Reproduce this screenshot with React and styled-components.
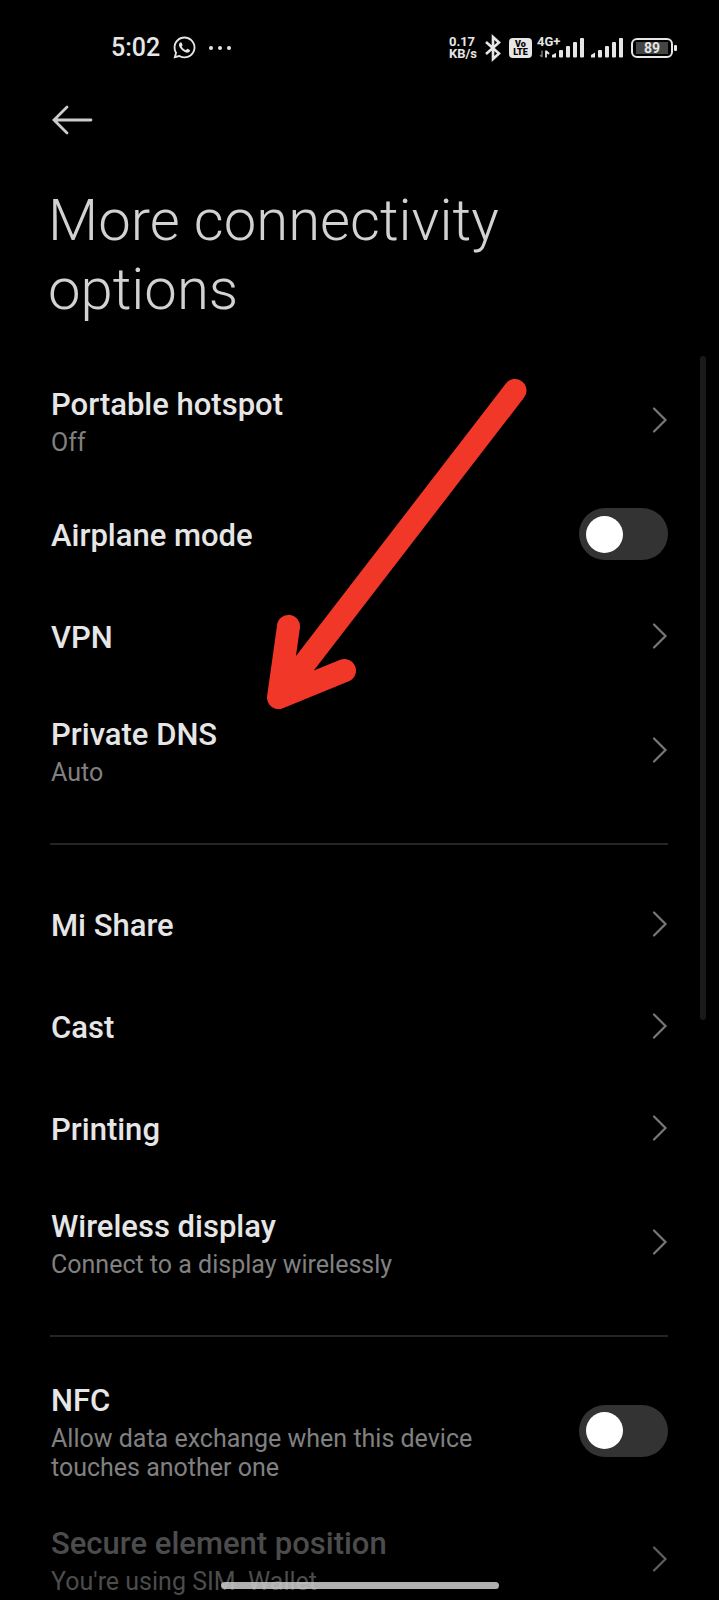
import React from 'react';
import styled, { createGlobalStyle } from 'styled-components';
import { FaWhatsapp } from 'react-icons/fa';

const GlobalStyle = createGlobalStyle`
  * {
    box-sizing: border-box;
  }

  body {
    margin: 0;
    background: #000;
    font-family: Roboto, "Liberation Sans", sans-serif;
  }
`;

const Screen = styled.div`
  position: relative;
  height: 100vh;
  overflow: hidden;
  background: #000;
  color: #e6e6e6;
`;

const StatusBar = styled.div`
  display: flex;
  align-items: center;
  justify-content: space-between;
  height: 95px;
  padding: 0 42px 0 111px;
`;

const StatusGroup = styled.div`
  display: flex;
  align-items: center;
  gap: ${(props) => props.$gap}px;
`;

const Time = styled.span`
  font-size: 25px;
  font-weight: 500;
  line-height: 28px;
`;

const Speed = styled.span`
  font-size: 13px;
  font-weight: 700;
  line-height: 12px;
`;

const VoLte = styled.span`
  display: flex;
  flex-direction: column;
  align-items: center;
  justify-content: center;
  width: 23px;
  height: 20px;
  border-radius: 4px;
  background: #e6e6e6;
  color: #000;
  font-size: 9px;
  font-weight: 900;
  line-height: 8px;
`;

const Mobile = styled.div`
  display: flex;
  position: relative;
`;

const NetworkType = styled.span`
  position: absolute;
  top: 0;
  left: -2px;
  font-size: 13px;
  font-weight: 700;
  line-height: 10px;
`;

const Battery = styled.span`
  display: flex;
  align-items: center;
`;

const BatteryBody = styled.span`
  display: flex;
  width: 42px;
  height: 20px;
  padding: 2px 3px;
  border: 2px solid #e6e6e6;
  border-radius: 6px;
`;

const BatteryLevel = styled.span`
  flex: 1;
  background: #444;
  font-size: 14px;
  font-weight: 700;
  line-height: 13px;
  text-align: center;
`;

const BatteryTip = styled.span`
  width: 3px;
  height: 6px;
  margin-left: 1px;
  border-radius: 1px;
  background: #e6e6e6;
`;

const Header = styled.header`
  padding: 0 48px;
`;

const BackButton = styled.button`
  display: block;
  height: 52px;
  padding: 0 4px;
  border: 0;
  background: none;
  color: #ccc;
`;

const Title = styled.h1`
  margin: 0;
  padding: 39px 0 33px;
  color: #d2d2d2;
  font-size: 58px;
  font-weight: 300;
  line-height: 69px;
`;

const Section = styled.section`
  margin: 0 51px 0 50px;

  & + & {
    margin-top: 30px;
    padding-top: 28px;
    border-top: 2px solid #242424;
  }
`;

const rowStyles = `
  display: flex;
  align-items: center;
  justify-content: space-between;
  width: 100%;
  padding: 14px 0;
  border: 0;
  background: none;
  color: inherit;
  font-family: inherit;
  text-align: left;
`;

const RowText = styled.span`
  display: flex;
  flex-direction: column;
  gap: 5px;
  max-width: 440px;
  padding: 4px 0 0 1px;
`;

const RowTitle = styled.span`
  font-size: 31px;
  font-weight: 500;
  line-height: 36px;
`;

const RowNote = styled.span`
  color: #808080;
  font-size: 25px;
  line-height: 29px;
  white-space: pre-wrap;
`;

const LinkRow = styled.button`
  ${rowStyles}
  min-height: ${(props) => (props.$tall ? 126 : 102)}px;

  &:disabled ${RowTitle}, &:disabled ${RowNote} {
    color: #4c4c4c;
  }

  &:disabled svg {
    opacity: 0.8;
  }
`;

const SwitchRow = styled.label`
  ${rowStyles}
  min-height: 102px;
`;

const Switch = styled.input`
  appearance: none;
  flex: none;
  display: flex;
  align-items: center;
  width: 89px;
  height: 52px;
  margin: 0;
  padding: 0 7px;
  border-radius: 26px;
  background: #333;

  &::before {
    content: "";
    width: 37px;
    height: 37px;
    border-radius: 50%;
    background: #fff;
  }

  &:checked {
    justify-content: flex-end;
    background: #277af7;
  }
`;

const ScrollThumb = styled.div`
  position: absolute;
  top: 356px;
  right: 13px;
  width: 6px;
  height: 664px;
  border-radius: 3px;
  background: #1a1a1a;
`;

const Pointer = styled.svg`
  position: absolute;
  top: 370px;
  left: 260px;
  pointer-events: none;
`;

const HomeBar = styled.div`
  position: absolute;
  bottom: 11px;
  left: 50%;
  width: 278px;
  height: 7px;
  margin-left: -139px;
  border-radius: 4px;
  background: rgba(205, 205, 205, 0.86);
`;

const Dots = () => (
  <svg width="22" height="6" fill="#e6e6e6">
    <circle cx="2" cy="3" r="2" />
    <circle cx="11" cy="3" r="2" />
    <circle cx="20" cy="3" r="2" />
  </svg>
);

const Bluetooth = () => (
  <svg width="18" height="28" fill="none" stroke="#e6e6e6" strokeWidth="2.6">
    <path d="M2 8 L15 19.500 L9 25 V3 L15 8.500 L2 20" />
  </svg>
);

const Bars = () => (
  <svg width="33" height="21" fill="#e6e6e6">
    <path d="M0 20.500 V18 L4 15.500 V20.500 Z" />
    <rect x="7" y="13" width="4" height="7.500" rx="1" />
    <rect x="14" y="9" width="4" height="11.500" rx="1" />
    <rect x="21" y="5" width="4" height="15.500" rx="1" />
    <rect x="28" y="1" width="4" height="19.500" rx="1" />
  </svg>
);

const DataBars = () => (
  <svg width="45" height="21" fill="#e6e6e6">
    <path d="M3 13.500 V20 M1 18 L3 20" stroke="#777" strokeWidth="1.500" />
    <path d="M7 13.500 V20.500 M7 14 L10 17" stroke="#e6e6e6" strokeWidth="1.800" />
    <path d="M13 20.500 V18 L17 16 V20.500 Z" />
    <rect x="20" y="13" width="4" height="7.500" rx="1" />
    <rect x="27" y="9" width="4" height="11.500" rx="1" />
    <rect x="34" y="5" width="4" height="15.500" rx="1" />
    <rect x="41" y="1" width="4" height="19.500" rx="1" />
  </svg>
);

const BackArrow = () => (
  <svg width="42" height="30" fill="none" stroke="currentColor" strokeWidth="2.8" strokeLinecap="round">
    <path d="M2 15 H39 M15 2 L2 15 L15 28" />
  </svg>
);

const Chevron = () => (
  <svg width="16" height="28" fill="none" stroke="#777" strokeWidth="2.2" strokeLinecap="round">
    <path d="M2 2.500 L13.500 14 L2 25.500" />
  </svg>
);

const LinkItem = ({ title, note, disabled }) => (
  <LinkRow type="button" $tall={Boolean(note)} disabled={disabled}>
    <RowText>
      <RowTitle>{title}</RowTitle>
      {note && <RowNote>{note}</RowNote>}
    </RowText>
    <Chevron />
  </LinkRow>
);

const SwitchItem = ({ id, title, note }) => (
  <SwitchRow htmlFor={id}>
    <RowText>
      <RowTitle>{title}</RowTitle>
      {note && <RowNote>{note}</RowNote>}
    </RowText>
    <Switch id={id} type="checkbox" />
  </SwitchRow>
);

const App = () => {
  return (
    <>
      <GlobalStyle />
      <Screen>
        <StatusBar>
          <StatusGroup $gap={12}>
            <Time>5:02</Time>
            <FaWhatsapp size={25} />
            <Dots />
          </StatusGroup>
          <StatusGroup $gap={7}>
            <Speed>0.17<br />KB/s</Speed>
            <Bluetooth />
            <VoLte><span>Vo</span><span>LTE</span></VoLte>
            <Mobile>
              <NetworkType>4G+</NetworkType>
              <DataBars />
            </Mobile>
            <Bars />
            <Battery>
              <BatteryBody><BatteryLevel>89</BatteryLevel></BatteryBody>
              <BatteryTip />
            </Battery>
          </StatusGroup>
        </StatusBar>

        <Header>
          <BackButton type="button" aria-label="Back"><BackArrow /></BackButton>
          <Title>More connectivity options</Title>
        </Header>

        <main>
          <Section>
            <LinkItem title="Portable hotspot" note="Off" />
            <SwitchItem id="airplane" title="Airplane mode" />
            <LinkItem title="VPN" />
            <LinkItem title="Private DNS" note="Auto" />
          </Section>
          <Section>
            <LinkItem title="Mi Share" />
            <LinkItem title="Cast" />
            <LinkItem title="Printing" />
            <LinkItem title="Wireless display" note="Connect to a display wirelessly" />
          </Section>
          <Section>
            <SwitchItem id="nfc" title="NFC" note="Allow data exchange when this device touches another one" />
            <LinkItem title="Secure element position" note="You're using SIM  Wallet" disabled />
          </Section>
        </main>

        <ScrollThumb />
        <Pointer width="280" height="350" fill="none" stroke="#f13727" strokeWidth="23" strokeLinecap="round" strokeLinejoin="round">
          <path d="M255 20.500 L18.500 327.500 M28.500 256.500 L18.500 327.500 L84.500 300.500" />
        </Pointer>
        <HomeBar />
      </Screen>
    </>
  );
};

export default App;
